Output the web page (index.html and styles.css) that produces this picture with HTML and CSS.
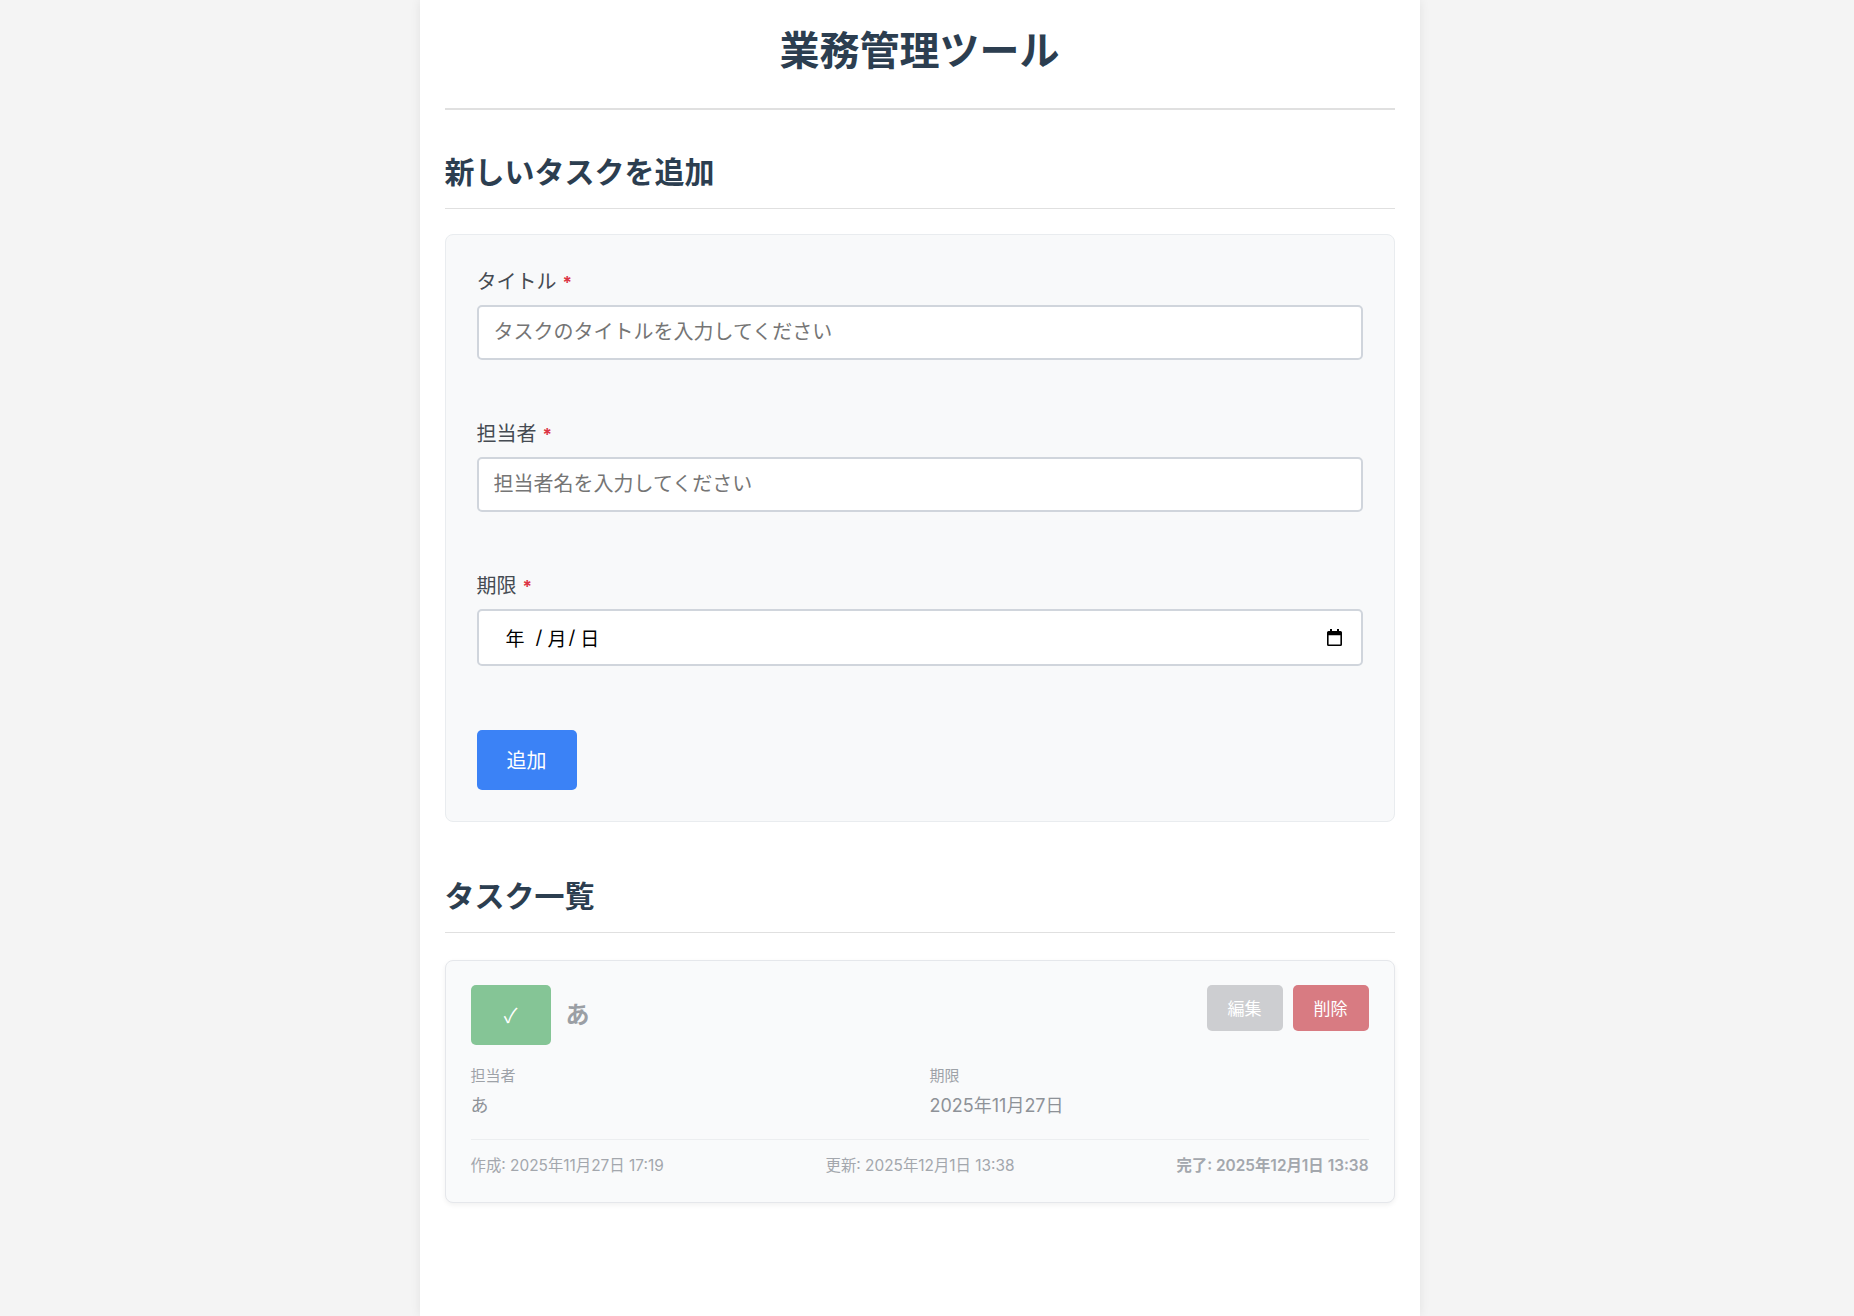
FILE: index.html
```html
<!DOCTYPE html>
<html lang="ja">
<head>
<meta charset="utf-8">
<title>業務管理ツール</title>
<link rel="stylesheet" href="styles.css">
</head>
<body>
<div class="container">
  <h1 class="app-title">業務管理ツール</h1>

  <section class="add-section">
    <h2 class="section-title">新しいタスクを追加</h2>
    <form class="task-form">
      <div class="form-group">
        <label class="form-label" for="title">タイトル<span class="required">*</span></label>
        <input id="title" class="form-input" type="text" placeholder="タスクのタイトルを入力してください">
      </div>
      <div class="form-group">
        <label class="form-label" for="assignee">担当者<span class="required">*</span></label>
        <input id="assignee" class="form-input" type="text" placeholder="担当者名を入力してください">
      </div>
      <div class="form-group">
        <label class="form-label">期限<span class="required">*</span></label>
        <div class="date-input">
          <span class="date-text"><span class="date-year">年</span><span class="date-sep">/</span><span>月</span><span class="date-sep date-sep-2">/</span><span>日</span></span>
          <svg class="date-icon" width="15" height="17" viewBox="0 0 15 17" aria-hidden="true">
            <path fill-rule="evenodd" d="M3 0h2v2h5V0h2v2h1.5A1.5 1.5 0 0 1 15 3.5v12a1.5 1.5 0 0 1-1.5 1.5h-12A1.5 1.5 0 0 1 0 15.5v-12A1.5 1.5 0 0 1 1.5 2H3z M1.6 6.2v9.2h11.8V6.2z"/>
          </svg>
        </div>
      </div>
      <button class="btn-add" type="button">追加</button>
    </form>
  </section>

  <section class="list-section">
    <h2 class="section-title">タスク一覧</h2>
    <div class="task-list">
      <article class="task-card">
        <div class="task-header">
          <div class="task-main">
            <button class="btn-check" type="button">✓</button>
            <h3 class="task-title">あ</h3>
          </div>
          <div class="task-actions">
            <button class="btn-edit" type="button">編集</button>
            <button class="btn-delete" type="button">削除</button>
          </div>
        </div>
        <div class="task-details">
          <div class="detail-item">
            <div class="detail-label">担当者</div>
            <div class="detail-value">あ</div>
          </div>
          <div class="detail-item">
            <div class="detail-label">期限</div>
            <div class="detail-value">2025年11月27日</div>
          </div>
        </div>
        <div class="task-meta">
          <span>作成: 2025年11月27日 17:19</span>
          <span>更新: 2025年12月1日 13:38</span>
          <span class="meta-completed">完了: 2025年12月1日 13:38</span>
        </div>
      </article>
    </div>
  </section>
</div>
</body>
</html>
```

FILE: styles.css
```css
html, body {
  margin: 0;
}

body {
  padding: 0 15px 0 0;
  background: #f4f4f4;
  font-family: "Inter", "Noto Sans CJK JP", sans-serif;
  color: #333;
}

.container {
  max-width: 1000px;
  min-height: 100vh;
  margin: 0 auto;
  box-sizing: border-box;
  padding: 27px 25px 40px;
  background: #fff;
  box-shadow: 0 0 10px rgba(0, 0, 0, 0.08);
}

.app-title {
  margin: 0 0 43px;
  padding-bottom: 33px;
  border-bottom: 2px solid #e0e0e0;
  font-size: 40px;
  line-height: 48px;
  font-weight: 700;
  text-align: center;
  color: #2c3e50;
}

.section-title {
  margin: 0 0 25px;
  padding-bottom: 17px;
  border-bottom: 1px solid #e0e0e0;
  font-size: 30px;
  line-height: 38px;
  font-weight: 700;
  color: #2c3e50;
}

/* form */
.task-form {
  margin: 0 0 55px;
  padding: 33px 31px 31px;
  background: #f8f9fa;
  border: 1px solid #e9ecef;
  border-radius: 8px;
}

.form-group {
  margin-bottom: 60.5px;
}

.form-label {
  display: block;
  margin-bottom: 7.5px;
  font-size: 20px;
  line-height: 28px;
  color: #454b52;
}

.required {
  margin-left: 6px;
  font-size: 17px;
  font-weight: 700;
  color: #dc3545;
}

.form-input {
  display: block;
  width: 100%;
  height: 55px;
  box-sizing: border-box;
  padding: 0 15px;
  border: 2px solid #d0d5dc;
  border-radius: 5px;
  background: #fff;
  font-family: inherit;
  font-size: 20px;
  color: #333;
  outline: none;
}

.form-input::placeholder {
  color: #757575;
}

.date-input {
  display: flex;
  align-items: center;
  justify-content: space-between;
  height: 57px;
  box-sizing: border-box;
  padding: 0 19px 0 27px;
  border: 2px solid #d0d5dc;
  border-radius: 5px;
  background: #fff;
  font-size: 19px;
  color: #000;
}

.date-text {
  display: flex;
  align-items: center;
}

.date-year {
  margin-right: 11px;
}

.date-sep {
  margin: 0 5px 0 0;
}

.date-sep-2 {
  margin: 0 5px 0 2px;
}

.date-icon {
  display: block;
  fill: #000;
}

.btn-add {
  display: block;
  width: 100px;
  height: 60px;
  margin-top: 64px;
  padding: 0;
  border: none;
  border-radius: 5px;
  background: #3b82f6;
  color: #fff;
  font-family: inherit;
  font-size: 20px;
}

/* task list */
.task-list {
  padding-top: 2px;
}

.task-card {
  padding: 24px 25px 25px;
  background: #f9fafb;
  border: 1px solid #e5e7eb;
  border-radius: 8px;
  box-shadow: 0 2px 5px rgba(0, 0, 0, 0.06);
}

.task-header {
  display: flex;
  justify-content: space-between;
  align-items: flex-start;
}

.task-main {
  display: flex;
  align-items: center;
  gap: 15px;
}

.btn-check {
  width: 80px;
  height: 60px;
  padding: 0;
  border: none;
  border-radius: 5px;
  background: #85c596;
  color: #fff;
  font-family: "Noto Sans CJK JP", "DejaVu Sans", sans-serif;
  font-size: 20px;
  line-height: 1;
}

.task-title {
  margin: 0;
  font-size: 24px;
  line-height: 32px;
  font-weight: 700;
  color: #9b9fa5;
}

.task-actions {
  display: flex;
  gap: 10px;
}

.btn-edit,
.btn-delete {
  height: 46px;
  padding: 0 21px;
  border: none;
  border-radius: 5px;
  color: #fff;
  font-family: inherit;
  font-size: 17px;
}

.btn-edit {
  background: #cdced1;
}

.btn-delete {
  background: #d87b82;
}

.task-details {
  display: grid;
  grid-template-columns: 1fr 1fr;
  gap: 20px;
  margin: 20px 0 19px;
}

.detail-label {
  font-size: 15px;
  line-height: 22px;
  color: #9ea2a8;
}

.detail-value {
  margin-top: 5px;
  font-size: 18px;
  line-height: 28px;
  color: #8e9298;
}

.task-meta {
  display: flex;
  justify-content: space-between;
  padding-top: 15.5px;
  border-top: 1px solid #eceef0;
  font-size: 15.4px;
  line-height: 22px;
  color: #a3a7ad;
}

.meta-completed {
  font-weight: 600;
}
```
